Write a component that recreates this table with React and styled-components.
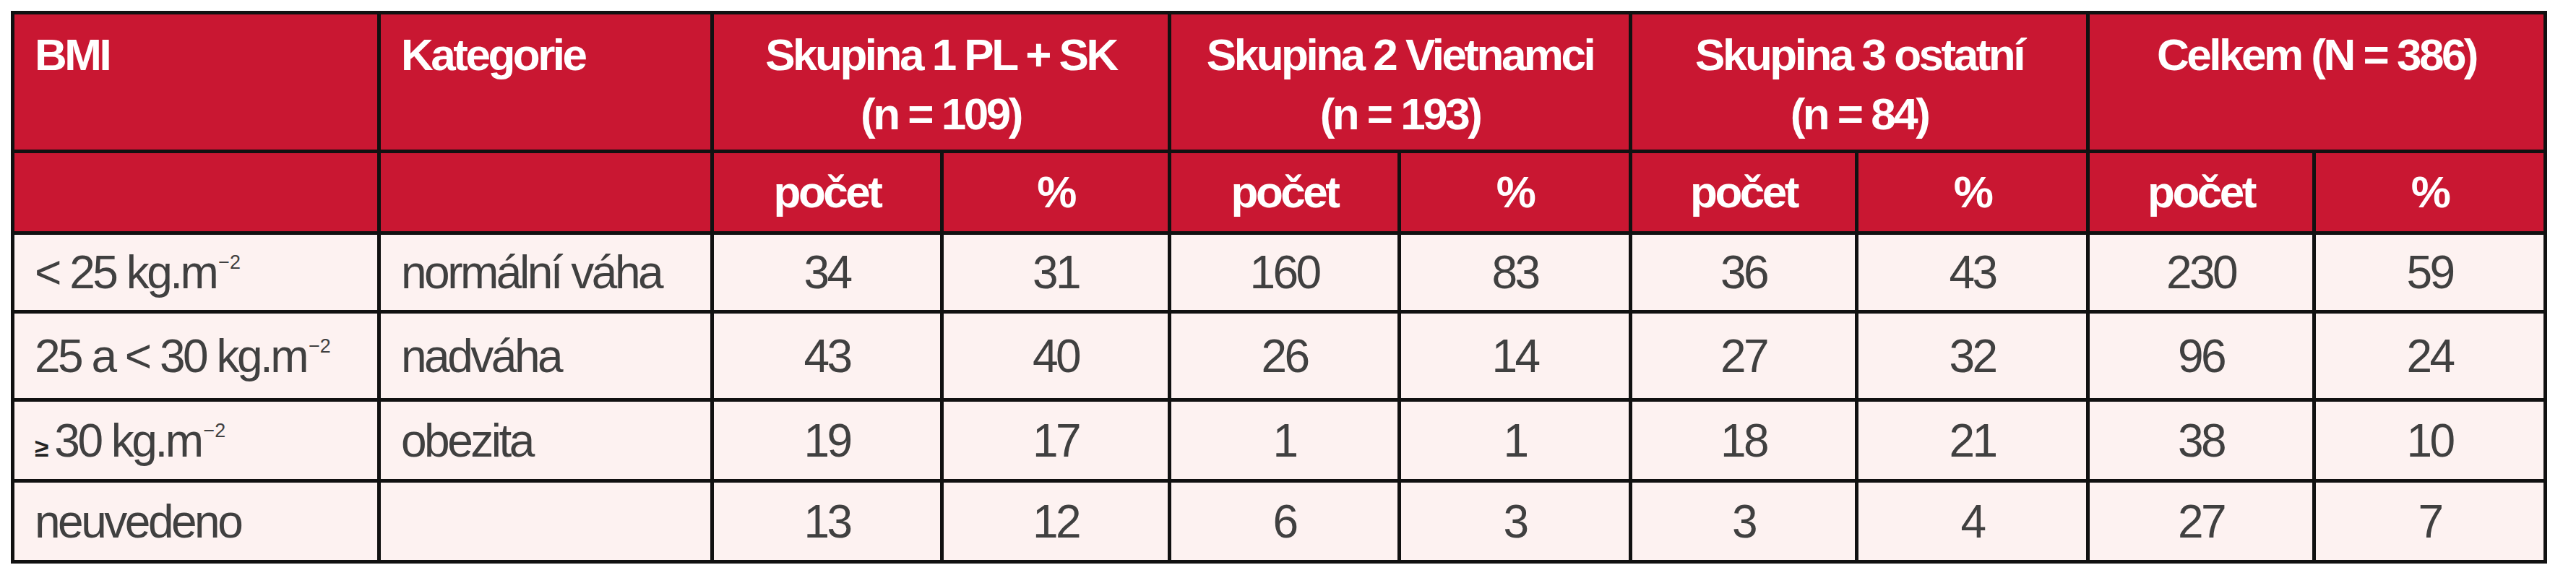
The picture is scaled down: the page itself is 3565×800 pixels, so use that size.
import React from 'react'
import styled, { createGlobalStyle } from 'styled-components'

const GlobalStyle = createGlobalStyle`
  body {
    margin: 0;
    background: #ffffff;
    font-family: "Liberation Sans Narrow", "Liberation Sans", Arial, sans-serif;
  }
`

const Page = styled.div`
  padding: 15px 15px;
`

const Table = styled.table`
  border-collapse: collapse;
  table-layout: fixed;
  width: 3510px;
  border: 5px solid #111;
`

const HeadCell = styled.th`
  background: #c91732;
  color: #ffffff;
  border: 5px solid #111;
  font-size: 62px;
  line-height: 82px;
  letter-spacing: -3.5px;
  font-weight: 700;
  padding: ${props => (props.$top ? '15px 28px 0' : '0 28px')};
  text-align: ${props => (props.$left ? 'left' : 'center')};
  vertical-align: ${props => (props.$top ? 'top' : 'middle')};
  white-space: nowrap;
`

const Row = styled.tr`
  height: ${props => props.$height}px;
`

const Cell = styled.td`
  background: #fdf2f1;
  color: #404040;
  border: 5px solid #111;
  font-size: 64px;
  line-height: 1;
  letter-spacing: -3.5px;
  padding: 0 28px;
  text-align: ${props => (props.$left ? 'left' : 'center')};
  vertical-align: middle;
  white-space: nowrap;
`

const Sup = styled.sup`
  font-size: 0.42em;
  vertical-align: 1em;
  line-height: 0;
  letter-spacing: 0;
  margin-left: 3px;
`

const Geq = styled.span`
  font-size: 0.55em;
  font-weight: 700;
  color: #222;
  letter-spacing: 0;
  margin-right: 8px;
`

const colWidths = [507, 461, 318, 315, 318, 320, 313, 320, 313, 320]

const groups = [
  ['Skupina 1 PL + SK', '(n = 109)'],
  ['Skupina 2 Vietnamci', '(n = 193)'],
  ['Skupina 3 ostatní', '(n = 84)'],
  ['Celkem (N = 386)', null]
]

const unit = <>kg.m<Sup>−2</Sup></>

const rows = [
  { bmi: <>&lt; 25 {unit}</>, cat: 'normální váha', vals: [34, 31, 160, 83, 36, 43, 230, 59], h: 109 },
  { bmi: <>25 a &lt; 30 {unit}</>, cat: 'nadváha', vals: [43, 40, 26, 14, 27, 32, 96, 24], h: 122 },
  { bmi: <><Geq>≥</Geq>30 {unit}</>, cat: 'obezita', vals: [19, 17, 1, 1, 18, 21, 38, 10], h: 112 },
  { bmi: 'neuvedeno', cat: '', vals: [13, 12, 6, 3, 3, 4, 27, 7], h: 112 }
]

const App = () => {
  return <Page>
    <GlobalStyle />
    <Table>
      <colgroup>
        {colWidths.map((w, i) => <col key={i} style={{ width: w }} />)}
      </colgroup>
      <thead>
        <Row $height={192}>
          <HeadCell $top $left>BMI</HeadCell>
          <HeadCell $top $left>Kategorie</HeadCell>
          {groups.map((g, i) => (
            <HeadCell $top colSpan={2} key={i}>
              {g[0]}{g[1] && <><br />{g[1]}</>}
            </HeadCell>
          ))}
        </Row>
        <Row $height={113}>
          <HeadCell />
          <HeadCell />
          {groups.map((g, i) => (
            <React.Fragment key={i}>
              <HeadCell>počet</HeadCell>
              <HeadCell>%</HeadCell>
            </React.Fragment>
          ))}
        </Row>
      </thead>
      <tbody>
        {rows.map((r, i) => (
          <Row $height={r.h} key={i}>
            <Cell $left>{r.bmi}</Cell>
            <Cell $left>{r.cat}</Cell>
            {r.vals.map((v, j) => <Cell key={j}>{v}</Cell>)}
          </Row>
        ))}
      </tbody>
    </Table>
  </Page>
}

export default App
